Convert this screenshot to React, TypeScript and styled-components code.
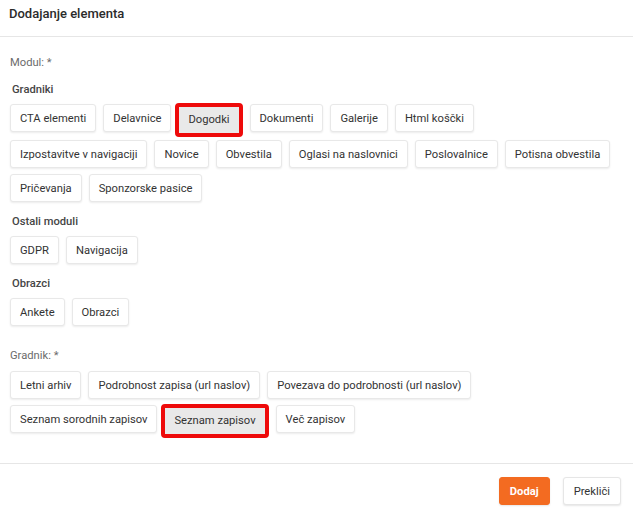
import React from 'react'
import styled, { createGlobalStyle } from 'styled-components'

const GlobalStyle = createGlobalStyle`
  html, body {
    margin: 0;
    padding: 0;
    background: #fff;
    font-family: Roboto, 'Liberation Sans', Arial, sans-serif;
  }
  * {
    box-sizing: border-box;
  }
`

const Modal = styled.div`
  width: 633px;
  height: 514px;
  display: flex;
  flex-direction: column;
  background: #fff;
`

const Header = styled.div`
  height: 37px;
  padding: 6px 9px 0;
  border-bottom: 1px solid #e6e6e6;
`

const Title = styled.h1`
  margin: 0;
  font-size: 13px;
  line-height: 16px;
  font-weight: 500;
  color: #2b2b2b;
`

const Body = styled.div`
  flex: 1;
  padding: 0 18px 0 10px;
`

const FieldLabel = styled.div<{ top: number; bottom?: number }>`
  margin-top: ${({ top }) => top}px;
  margin-bottom: ${({ bottom }) => bottom ?? 0}px;
  font-size: 11.2px;
  line-height: 16px;
  color: #6b6b6b;
`

const GroupLabel = styled.div<{ top: number }>`
  margin-top: ${({ top }) => top}px;
  margin-bottom: 6px;
  padding-left: 2px;
  font-size: 11.2px;
  line-height: 16px;
  font-weight: 500;
  color: #454545;
`

const ButtonWrap = styled.div`
  display: flex;
  flex-wrap: wrap;
  align-items: flex-start;
  gap: 6px 7px;
`

const Choice = styled.button<{ selected?: boolean }>`
  height: 28px;
  padding: 0 9px;
  border: 1px solid #e8e8e8;
  border-radius: 3px;
  background: #fff;
  box-shadow: 0 1px 2px rgba(0, 0, 0, 0.08);
  font-family: inherit;
  font-size: 11.2px;
  color: #333;
  white-space: nowrap;
  cursor: pointer;

  ${({ selected }) =>
    selected &&
    `
    height: 34px;
    margin: -1px 0 -3px -3px;
    padding: 0 9px 2px;
    border: 4px solid #ee0a0a;
    border-radius: 4px;
    background: #e9e9e9;
    box-shadow: none;
  `}
`

const Footer = styled.div`
  height: 51px;
  border-top: 1px solid #e6e6e6;
  display: flex;
  justify-content: flex-end;
  align-items: flex-start;
  gap: 13px;
  padding: 13px 12px 0 0;
`

const ActionButton = styled.button<{ primary?: boolean }>`
  height: 28px;
  padding: 0 10px;
  border-radius: 3px;
  border: 1px solid ${({ primary }) => (primary ? '#f36b21' : '#e6e6e6')};
  background: ${({ primary }) => (primary ? '#f36b21' : '#fff')};
  color: ${({ primary }) => (primary ? '#fff' : '#333')};
  font-family: inherit;
  font-size: 11.2px;
  font-weight: ${({ primary }) => (primary ? 700 : 400)};
  box-shadow: 0 1px 2px rgba(0, 0, 0, 0.1);
  cursor: pointer;
`

const gradniki = [
  'CTA elementi',
  'Delavnice',
  'Dogodki',
  'Dokumenti',
  'Galerije',
  'Html koščki',
  'Izpostavitve v navigaciji',
  'Novice',
  'Obvestila',
  'Oglasi na naslovnici',
  'Poslovalnice',
  'Potisna obvestila',
  'Pričevanja',
  'Sponzorske pasice',
]
const ostali = ['GDPR', 'Navigacija']
const obrazci = ['Ankete', 'Obrazci']
const views = [
  'Letni arhiv',
  'Podrobnost zapisa (url naslov)',
  'Povezava do podrobnosti (url naslov)',
  'Seznam sorodnih zapisov',
  'Seznam zapisov',
  'Več zapisov',
]

function Choices({ items, selected }: { items: string[]; selected?: string }) {
  return (
    <ButtonWrap>
      {items.map((item) => (
        <Choice key={item} selected={item === selected}>
          {item}
        </Choice>
      ))}
    </ButtonWrap>
  )
}

export default function App() {
  return (
    <>
      <GlobalStyle />
      <Modal>
        <Header>
          <Title>Dodajanje elementa</Title>
        </Header>
        <Body>
          <FieldLabel top={18}>Modul: *</FieldLabel>
          <GroupLabel top={11}>Gradniki</GroupLabel>
          <Choices items={gradniki} selected="Dogodki" />
          <GroupLabel top={12}>Ostali moduli</GroupLabel>
          <Choices items={ostali} />
          <GroupLabel top={12}>Obrazci</GroupLabel>
          <Choices items={obrazci} />
          <FieldLabel top={22} bottom={7}>
            Gradnik: *
          </FieldLabel>
          <Choices items={views} selected="Seznam zapisov" />
        </Body>
        <Footer>
          <ActionButton primary>Dodaj</ActionButton>
          <ActionButton>Prekliči</ActionButton>
        </Footer>
      </Modal>
    </>
  )
}
